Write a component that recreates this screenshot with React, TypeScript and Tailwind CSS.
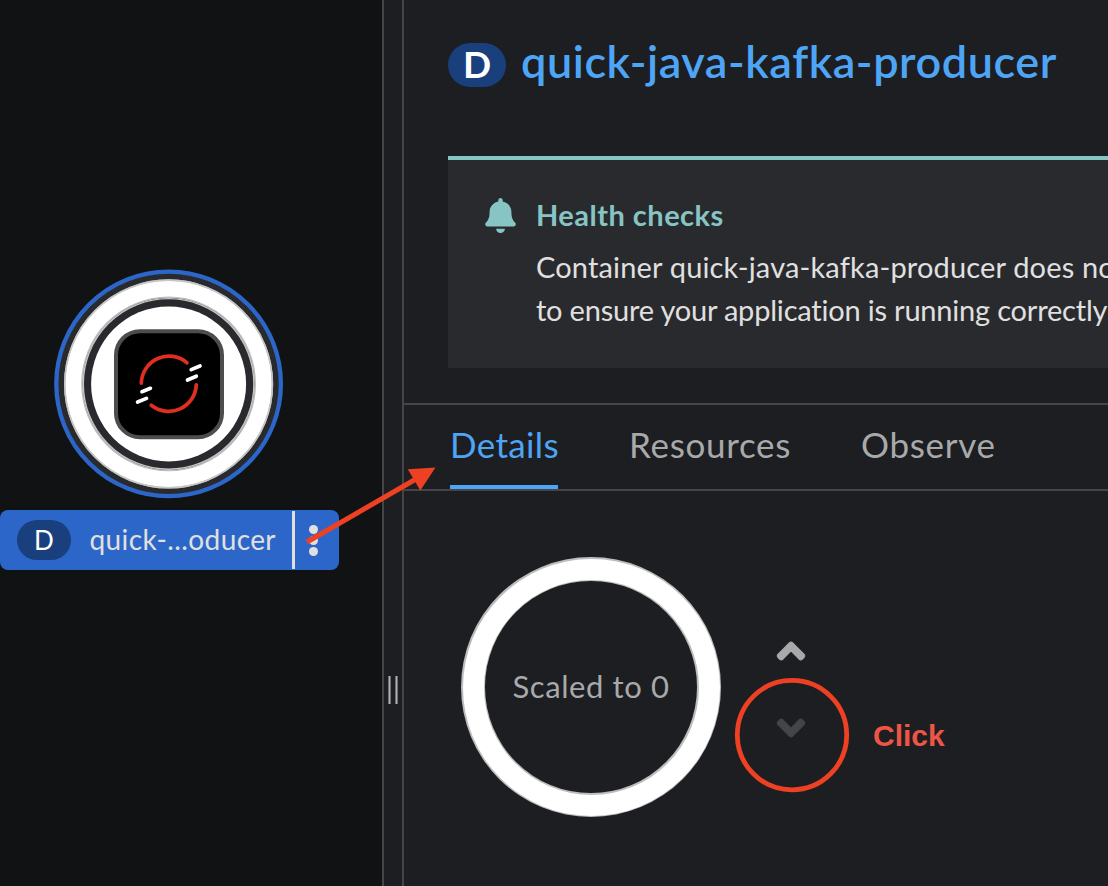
import type { ReactNode } from "react";
import { FaAngleDown, FaAngleUp, FaBell } from "react-icons/fa";

function ServerlessNode() {
  return (
    <svg className="block" width="230" height="230" viewBox="54 268.8 230 230" fill="none">
      <circle cx="168.6" cy="383.7" r="112.3" fill="#292a2e" stroke="#2b66c8" strokeWidth="4.3" />
      <circle cx="168.6" cy="383.7" r="95.2" stroke="#bdbdbd" strokeWidth="18.8" />
      <circle cx="168.6" cy="383.7" r="95.2" stroke="#fff" strokeWidth="15.6" />
      <circle cx="168.6" cy="383.7" r="85.3" stroke="#c7c7c7" strokeWidth="1.4" />
      <circle cx="168.6" cy="383.7" r="103.9" stroke="#c7c7c7" strokeWidth="1.4" />
      <circle cx="168.6" cy="383.7" r="77.5" fill="#fff" />
      <rect x="116" y="331" width="106" height="106" rx="24" fill="#000" stroke="#4d4d4d" strokeWidth="4" />
      <g strokeWidth="3.7" strokeLinecap="round">
        <path d="M141.3 382.9A27.7 27.7 0 0 1 187 362.6" stroke="#e02f20" />
        <path d="M196.3 384.6A27.7 27.7 0 0 1 151.3 405" stroke="#e02f20" />
        <path d="M191.2 369.4 200 365.8M187.5 379.8 196.3 376M142 391.5 150.4 388.1M137.6 401.8 146.5 398.2" stroke="#fff" />
      </g>
    </svg>
  );
}

function TopologyPane() {
  return (
    <section className="relative flex w-[382px] shrink-0 flex-col bg-[#101214] pt-[269px]">
      <div className="pl-[54px]">
        <ServerlessNode />
      </div>
      <div className="mt-[11px] flex h-[60px] w-[338.5px] items-center rounded-lg bg-[#2b66c8]">
        <span className="ml-[17px] flex h-10 w-[54px] items-center justify-center rounded-full bg-[#193f7c] pb-px text-[26px] leading-10 text-white">
          D
        </span>
        <span className="ml-[18.5px] w-[202.5px] whitespace-nowrap pb-[2px] text-[28px] leading-[58px] tracking-[0.4px] text-[#e0e0e0]">
          quick-...oducer
        </span>
        <span className="h-[58px] w-[3px] bg-[#e0e0e0]" />
        <span className="ml-[14px] mt-px flex flex-col gap-[1.7px]">
          <span className="size-[9px] rounded-full bg-[#e0e0e0]" />
          <span className="size-[9px] rounded-full bg-[#e0e0e0]" />
          <span className="size-[9px] rounded-full bg-[#e0e0e0]" />
        </span>
      </div>
    </section>
  );
}

function Splitter() {
  return (
    <div className="flex w-[22px] shrink-0 justify-center gap-1 border-x-2 border-[#444548] bg-[#1d1e21] pt-[676px]">
      <span className="h-7 w-[3px] border-x border-[#6f7072] bg-[#b0b0b2]" />
      <span className="h-7 w-[3px] border-x border-[#6f7072] bg-[#b0b0b2]" />
    </div>
  );
}

function Tab({ active = false, className, children }: { active?: boolean; className: string; children: ReactNode }) {
  return (
    <button
      className={`h-[84px] border-b-4 pb-[2px] text-left text-[35px] leading-[78px] whitespace-nowrap ${
        active ? "border-[#4fa5f5] text-[#4fa5f5]" : "border-transparent text-[#a8a9ab]"
      } ${className}`}
    >
      {children}
    </button>
  );
}

function HealthAlert() {
  return (
    <div className="ml-11 flex h-[212px] border-t-4 border-[#87c5c5] bg-[#292a2d] pl-[37px] pt-[33px]">
      <FaBell className="mt-[5px] h-[35px] w-[31px] shrink-0 text-[#87c5c5]" />
      <div className="ml-[20px] whitespace-nowrap text-[29px] leading-[43px] text-[#e0e0e0]">
        <h2 className="mb-[9px] pl-[-1px] font-bold tracking-[0.48px] text-[#87c5c5]">Health checks</h2>
        <p className="tracking-[0.16px]">Container quick-java-kafka-producer does no</p>
        <p className="tracking-[-0.2px]">to ensure your application is running correctly</p>
      </div>
    </div>
  );
}

function DetailsPanel() {
  return (
    <section className="flex min-w-0 flex-1 flex-col overflow-hidden bg-[#1d1e21]">
      <header className="flex h-[156px] items-start pl-11">
        <span className="mt-[43px] flex h-11 w-[58px] items-center justify-center rounded-full bg-[#193f7c] pb-[2px] text-[37px] font-bold leading-10 text-white">
          D
        </span>
        <h1 className="ml-[15px] mt-[34px] whitespace-nowrap text-[45px] font-semibold leading-[54px] tracking-[0.55px] text-[#4fa5f5]">
          quick-java-kafka-producer
        </h1>
      </header>
      <HealthAlert />
      <nav className="mt-[35px] flex h-[88px] border-y-2 border-[#444548] pl-[46px]">
        <Tab active className="w-[108px] tracking-[0.35px]">Details</Tab>
        <Tab className="ml-[71px] w-[162px] tracking-[0.7px]">Resources</Tab>
        <Tab className="ml-[70px] w-[136px] tracking-[0.7px]">Observe</Tab>
      </nav>
      <div className="flex pl-[57px] pt-[66px]">
        <div className="size-[260px] rounded-full bg-[#bdbdbd] p-[1.5px]">
          <div className="size-full rounded-full bg-white p-[21px]">
            <div className="size-full rounded-full bg-[#bdbdbd] p-[1.5px]">
              <div className="flex size-full items-center justify-center rounded-full bg-[#1d1e21] pb-[2px] text-[31px] leading-10 tracking-[0.6px] text-[#a8a9ab]">
                Scaled to 0
              </div>
            </div>
          </div>
        </div>
        <div className="ml-[48px] mt-[72px] flex flex-col gap-[33px]">
          <button className="text-[#a8a9ab]">
            <FaAngleUp className="size-[44px] stroke-current stroke-[12px]" />
          </button>
          <button className="text-[#444548]">
            <FaAngleDown className="size-[44px] stroke-current stroke-[12px]" />
          </button>
        </div>
      </div>
    </section>
  );
}

function Annotations() {
  return (
    <div className="pointer-events-none absolute inset-0">
      <svg className="block size-full" viewBox="0 0 1108 886" fill="none">
        <path d="M307 542 416 479" stroke="#ee4023" strokeWidth="5" />
        <path d="M435.5 467.5 407.8 469.2 420.3 490.6Z" fill="#ee4023" />
        <circle cx="792" cy="735.1" r="54.7" stroke="#ee4023" strokeWidth="4.8" />
      </svg>
      <span className="absolute left-[873px] top-[718px] font-['Liberation_Sans',sans-serif] text-[30px] font-bold leading-9 text-[#ee5547]">
        Click
      </span>
    </div>
  );
}

export default function App() {
  return (
    <main className="relative flex h-[886px] w-[1108px] overflow-hidden bg-[#101214] font-['Lato',sans-serif]">
      <TopologyPane />
      <Splitter />
      <DetailsPanel />
      <Annotations />
    </main>
  );
}
